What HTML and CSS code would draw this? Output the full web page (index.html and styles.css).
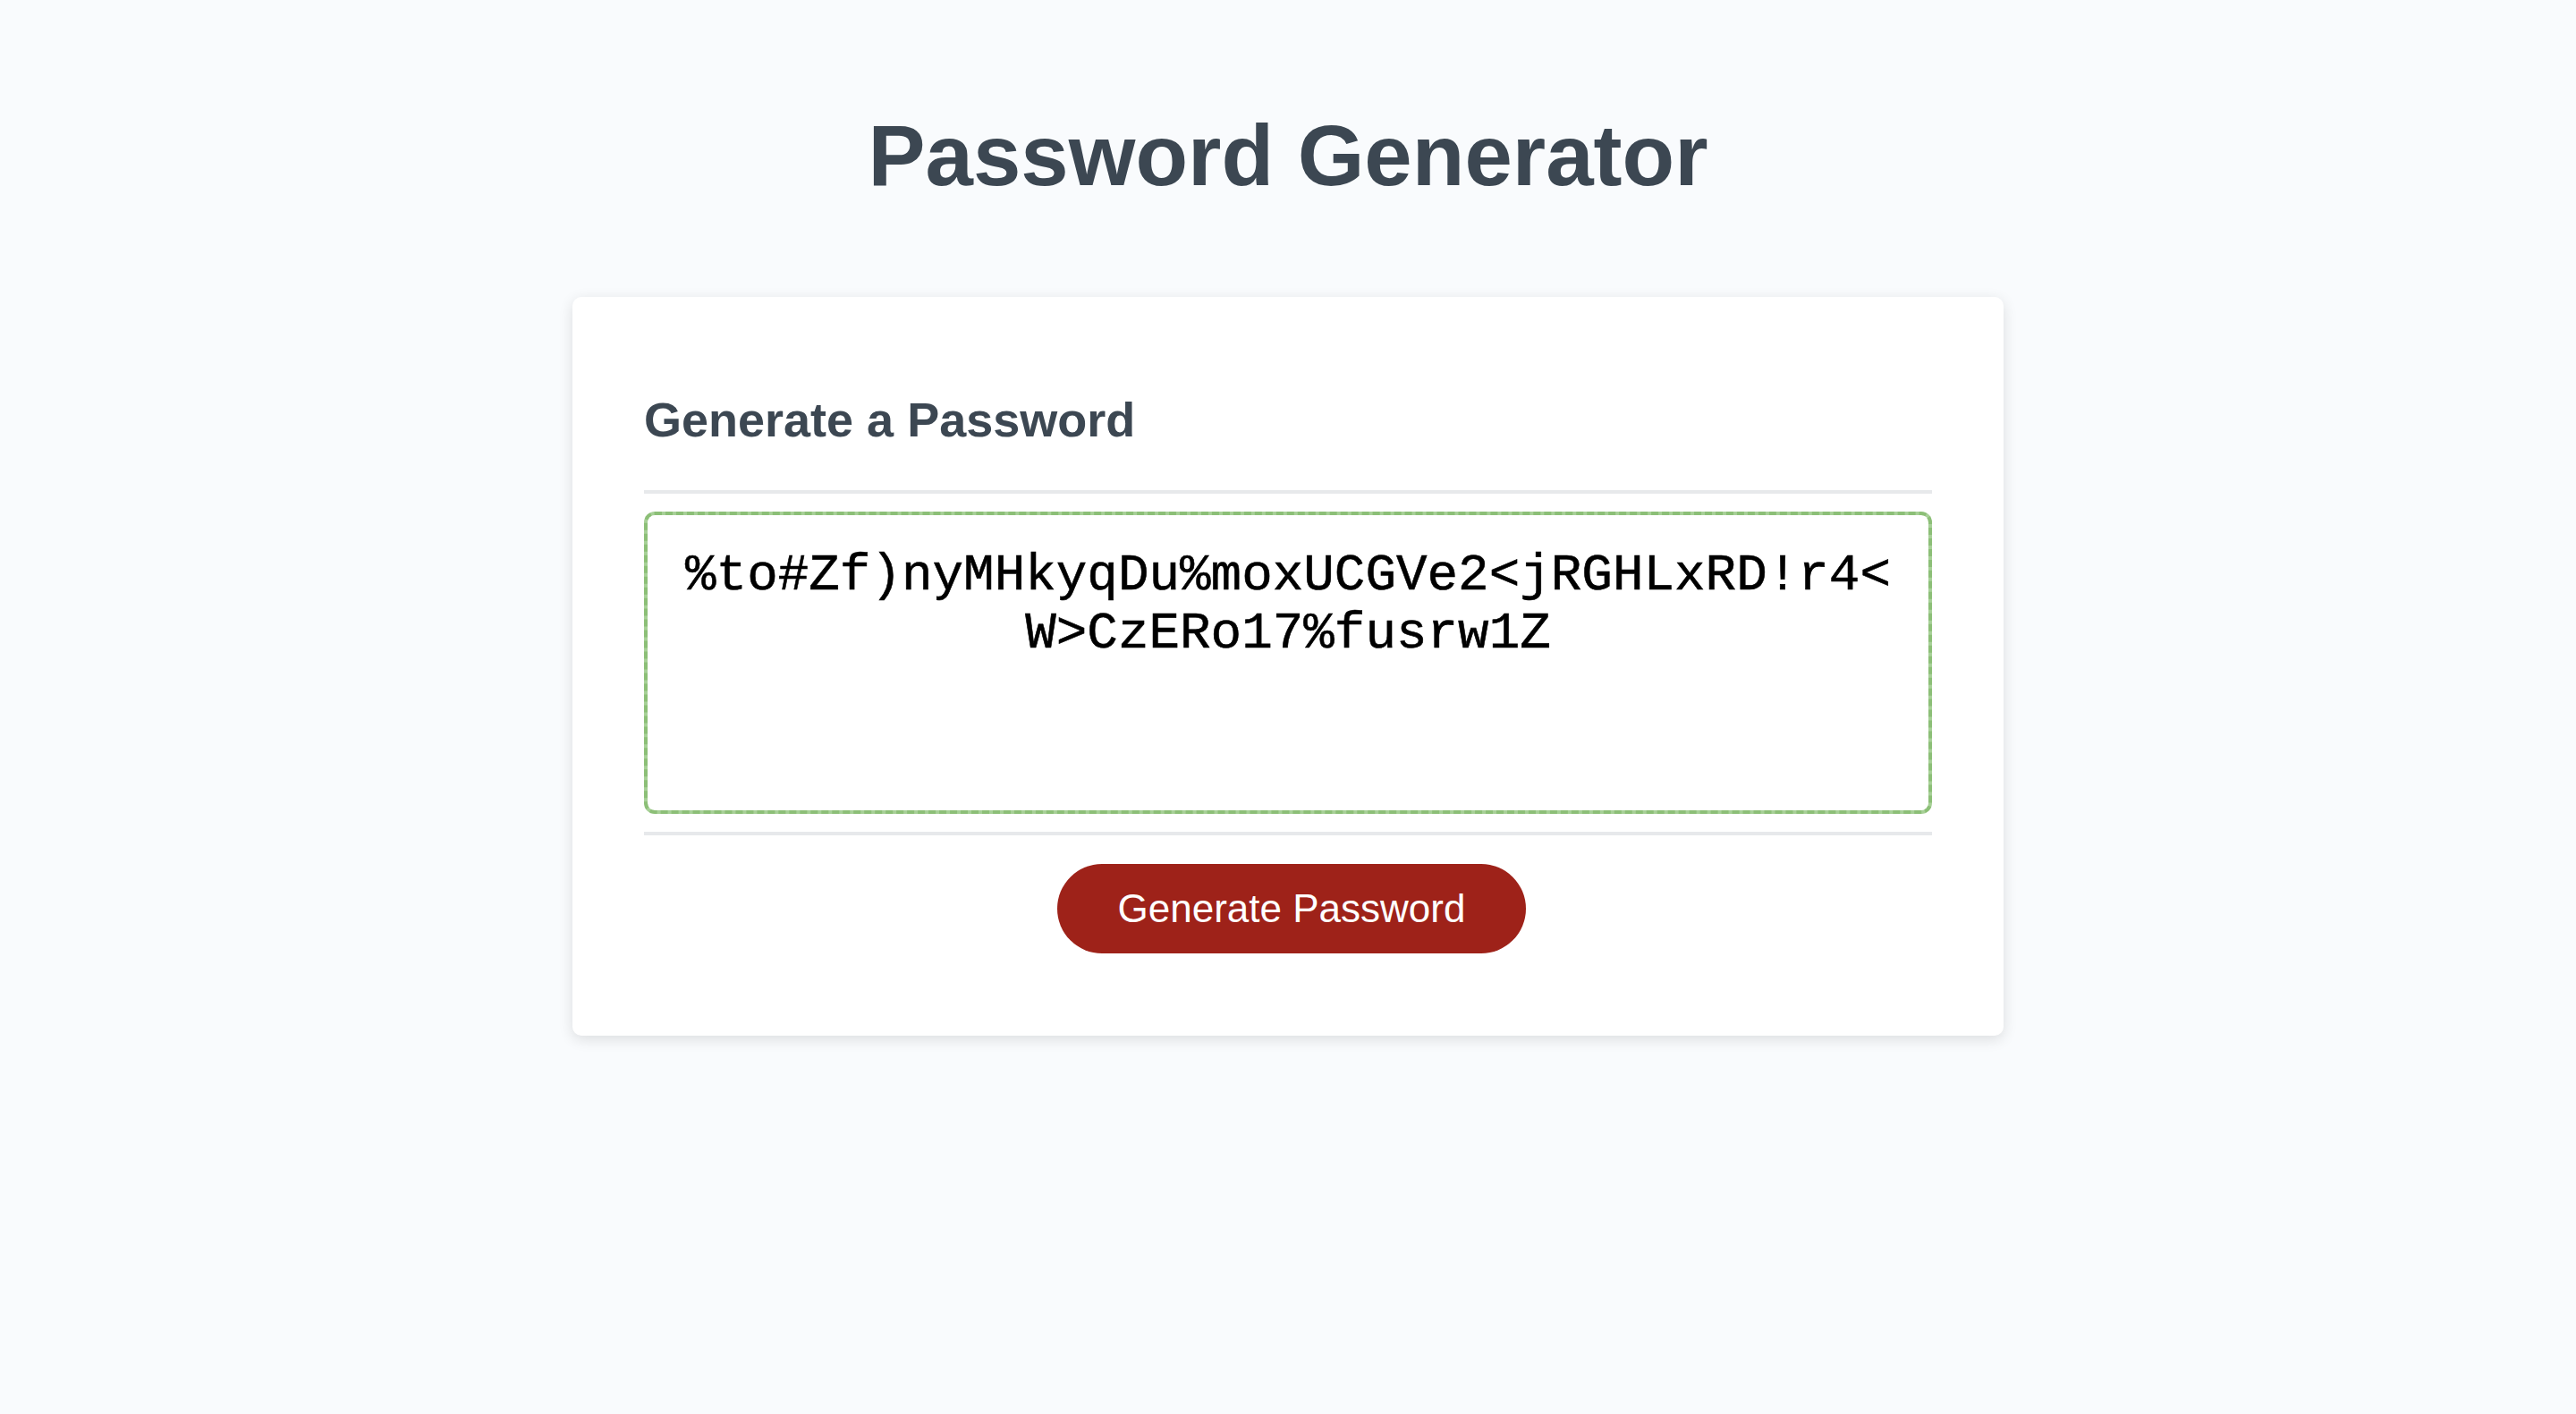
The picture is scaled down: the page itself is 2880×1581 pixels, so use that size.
FILE: index.html
```html
<!DOCTYPE html>
<html lang="en">
<head>
  <meta charset="UTF-8">
  <title>Password Generator</title>
  <link rel="stylesheet" href="styles.css">
</head>
<body>
  <div class="wrapper">
    <header>
      <h1>Password Generator</h1>
    </header>
    <div class="card">
      <div class="card-header">
        <h2>Generate a Password</h2>
      </div>
      <div class="card-body">
        <textarea readonly id="password" class="password-box" placeholder="Your Secure Password" aria-label="Generated Password">%to#Zf)nyMHkyqDu%moxUCGVe2&lt;jRGHLxRD!r4&lt;W&gt;CzERo17%fusrw1Z</textarea>
      </div>
      <div class="card-footer">
        <button id="generate" class="btn">Generate Password</button>
      </div>
    </div>
  </div>
</body>
</html>
```

FILE: styles.css
```css
*,
*::before,
*::after {
  box-sizing: border-box;
}

html,
body {
  margin: 0;
  padding: 0;
  height: 100%;
}

body {
  font-family: "Liberation Sans", Arial, Helvetica, sans-serif;
  background-color: #f9fbfd;
}

.wrapper {
  padding: 50px 40px 0;
}

header {
  text-align: center;
  padding: 0 40px 44px;
  color: #3c4752;
}

header h1 {
  margin: 69px 0 59px;
  font-size: 96px;
  font-weight: bold;
}

.card {
  max-width: 1600px;
  margin: 0 auto;
  padding: 60px 80px;
  background-color: #ffffff;
  border-radius: 10px;
  box-shadow: rgba(0, 0, 0, 0.12) 0 4px 16px 0;
  color: #3c4752;
  font-size: 36px;
}

.card-header h2 {
  margin: 46px 0 48px;
  font-size: 54px;
  font-weight: bold;
}

/* divider under the header and above the footer */
.card-header::after,
.card-footer::before {
  content: " ";
  display: block;
  width: 100%;
  height: 4px;
  background: #e7e9eb;
}

.password-box {
  -webkit-appearance: none;
  appearance: none;
  display: block;
  width: 100%;
  height: 338px;
  margin: 20px 0;
  padding: 35px 30px 165px;
  font-family: "Liberation Mono", "Courier New", monospace;
  font-size: 57.6px;
  line-height: normal;
  color: #000000;
  -webkit-text-stroke: 0.6px #000000;
  text-align: center;
  border: 4px dashed #8cbf77;
  border-radius: 12px;
  background:
    linear-gradient(#ffffff, #ffffff) padding-box,
    #a7d097 border-box;
  resize: none;
  overflow: hidden;
  outline: none;
}

.card-footer {
  text-align: center;
}

.card-footer::after {
  content: " ";
  display: block;
  clear: both;
}

.btn {
  display: inline-block;
  margin: 32px 32px 32px 40px;
  padding: 28px 68px;
  border: none;
  border-radius: 50px;
  background-color: #9e2219;
  color: #ffffff;
  font-family: "Liberation Sans", Arial, Helvetica, sans-serif;
  font-size: 44px;
  line-height: 44px;
  text-align: center;
  cursor: pointer;
}
```
